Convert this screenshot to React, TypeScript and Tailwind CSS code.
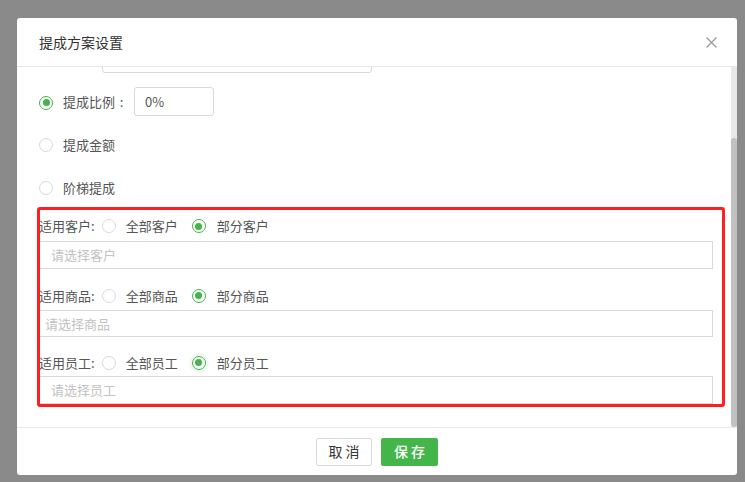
import React, { useLayoutEffect, useRef } from "react";

function Radio({ checked = false, halo = false }: { checked?: boolean; halo?: boolean }) {
  return (
    <span
      className={
        "w-[14px] h-[14px] rounded-full border flex items-center justify-center shrink-0 bg-white " +
        (checked ? "border-[#43b549] " : "border-[#d9d9d9] ") +
        (halo ? "shadow-[0_0_0_3px_rgba(67,181,73,0.08)]" : "")
      }
    >
      {checked && <span className="w-[7px] h-[7px] rounded-full bg-[#43b549]" />}
    </span>
  );
}

function ScopeGroup({
  label,
  all,
  part,
  placeholder,
  rowH,
  inputH,
  pad,
  top,
  halo,
}: {
  label: string;
  all: string;
  part: string;
  placeholder: string;
  rowH: string;
  inputH: string;
  pad: string;
  top: string;
  halo?: boolean;
}) {
  return (
    <div className={top}>
      <div className={"flex items-center text-[13px] text-[#555] " + rowH}>
        <span>{label}</span>
        <span className="ml-[7px]">
          <Radio />
        </span>
        <span className="ml-[10px]">{all}</span>
        <span className="ml-[14px]">
          <Radio checked halo={halo} />
        </span>
        <span className="ml-[11px]">{part}</span>
      </div>
      <div
        className={
          "border border-[#d9d9d9] flex items-center text-[13px] text-[#c2c2c2] bg-white " + inputH + " " + pad
        }
      >
        {placeholder}
      </div>
    </div>
  );
}

export default function App() {
  const bodyRef = useRef<HTMLDivElement>(null);
  useLayoutEffect(() => {
    if (bodyRef.current) bodyRef.current.scrollTop = bodyRef.current.scrollHeight;
  }, []);

  return (
    <div className="w-[745px] h-[482px] bg-[#8a8a8a] pt-[18px] pl-[17px] font-['Noto_Sans_CJK_SC','Microsoft_YaHei',sans-serif] overflow-hidden">
      <div className="w-[720px] h-[457px] bg-white rounded-[3px] flex flex-col overflow-hidden">
        {/* header */}
        <div className="h-[49px] shrink-0 border-b border-[#e8e8e8] flex items-center justify-between pl-[22px] pr-[20px]">
          <span className="text-[14px] text-[#333]">提成方案设置</span>
          <svg width="11" height="11" viewBox="0 0 11 11" className="mt-[1px]">
            <line x1="0.5" y1="0.5" x2="10.5" y2="10.5" stroke="#999" strokeWidth="1.2" />
            <line x1="10.5" y1="0.5" x2="0.5" y2="10.5" stroke="#999" strokeWidth="1.2" />
          </svg>
        </div>

        {/* body */}
        <div className="h-[360px] shrink-0 flex">
          <div ref={bodyRef} className="flex-1 h-full overflow-hidden">
            <div className="pl-[22px] pr-[18px] pt-[20px] pb-[20px]">
              <div className="flex items-center h-[29px] text-[13px] text-[#555]">
                <span className="w-[63px]">方案名称：</span>
                <div className="w-[270px] h-[29px] border border-[#d9d9d9] rounded-[3px]" />
              </div>
              <div className="flex items-center h-[29px] mt-[16px] pl-[63px]">
                <div className="w-[270px] h-[29px] border border-[#d9d9d9] rounded-[3px]" />
              </div>

              <div className="flex items-center h-[29px] mt-[14px] text-[13px] text-[#555]">
                <span className="mt-[2px]">
                  <Radio checked />
                </span>
                <span className="ml-[10px]">提成比例</span>
                <span className="inline-block w-[13px] text-center">:</span>
                <div className="ml-[6px] w-[80px] h-[29px] border border-[#d9d9d9] rounded-[3px] flex items-center pl-[10px]">
                  0%
                </div>
              </div>
              <div className="flex items-center h-[29px] mt-[14px] text-[13px] text-[#555]">
                <Radio />
                <span className="ml-[10px]">提成金额</span>
              </div>
              <div className="flex items-center h-[29px] mt-[14px] text-[13px] text-[#555]">
                <Radio />
                <span className="ml-[10px]">阶梯提成</span>
              </div>

              <div className="relative mt-[5px] pt-[4px] pb-[3px]">
                <ScopeGroup
                  label="适用客户:"
                  all="全部客户"
                  part="部分客户"
                  placeholder="请选择客户"
                  rowH="h-[30px]"
                  inputH="h-[28px]"
                  pad="pl-[11px]"
                  top=""
                />
                <ScopeGroup
                  label="适用商品:"
                  all="全部商品"
                  part="部分商品"
                  placeholder="请选择商品"
                  rowH="h-[29px]"
                  inputH="h-[27px]"
                  pad="pl-[5px]"
                  top="mt-[12px]"
                />
                <ScopeGroup
                  label="适用员工:"
                  all="全部员工"
                  part="部分员工"
                  placeholder="请选择员工"
                  rowH="h-[27px]"
                  inputH="h-[28px]"
                  pad="pl-[11px]"
                  top="mt-[12px]"
                  halo
                />
                <div className="absolute top-0 bottom-0 -left-[2px] -right-[12px] border-[3px] border-[#ff1f1f] rounded-[3px] pointer-events-none" />
              </div>
            </div>
          </div>
          {/* scrollbar */}
          <div className="w-[6px] h-full bg-[#e8e8e8] pt-[71px] flex flex-col">
            <div className="flex-1 bg-[#c1c1c1] rounded-[3px]" />
          </div>
        </div>

        {/* footer */}
        <div className="flex-1 border-t border-[#e8e8e8] flex items-center justify-center gap-[9px]">
          <button className="w-[56px] h-[28px] border border-[#d9d9d9] rounded-[2px] bg-white text-[14px] text-[#333] tracking-[3px] pl-[3px] flex items-center justify-center">
            取消
          </button>
          <button className="w-[57px] h-[28px] rounded-[2px] bg-[#44b549] text-[14px] text-white font-medium tracking-[3px] pl-[3px] flex items-center justify-center">
            保存
          </button>
        </div>
      </div>
    </div>
  );
}
